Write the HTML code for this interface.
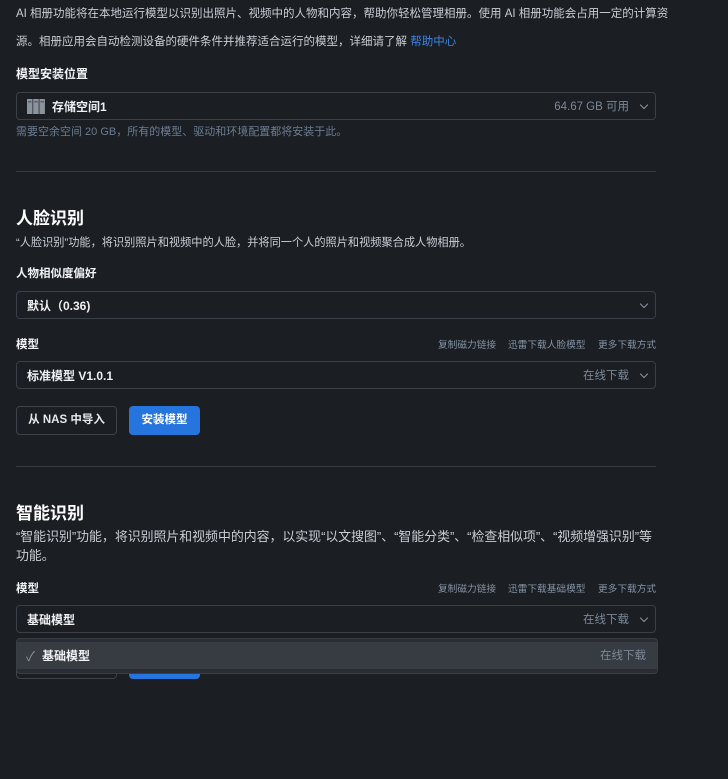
<!DOCTYPE html>
<html><head><meta charset="utf-8"><style>
*{margin:0;padding:0;box-sizing:border-box}
body{width:728px;height:779px;background:#1b1e23;font-family:"Liberation Sans","Noto Sans CJK SC",sans-serif;color:#d8dde3;position:relative;overflow:hidden;font-size:12px}
.a{position:absolute;white-space:nowrap}
.p{font-size:11.5px;color:#c9ced5}
.lbl{font-size:12px;font-weight:bold;color:#f0f2f5}
.h{font-size:17px;font-weight:bold;color:#fff}
.sel{position:absolute;left:16px;width:640px;height:28px;border:1px solid #3b4048;border-radius:4px}
.sel .t{position:absolute;left:10px;top:5px;font-size:12px;color:#eef0f3}
.sel .r{position:absolute;right:26px;top:5px;font-size:11.5px;color:#7d8896}
.chev{position:absolute;right:8px;top:9px;width:6px;height:6px;border-right:1px solid #8a94a0;border-bottom:1px solid #8a94a0;transform:rotate(45deg)}
.div{position:absolute;left:16px;width:640px;height:1px;background:#363a41}
.lk{position:absolute;font-size:9.7px;color:#8593a3;top:0}
.btn1{position:absolute;left:16px;width:101px;height:29px;border:1px solid #3e434b;border-radius:4px;font-size:11.5px;font-weight:bold;color:#e6e8eb;text-align:center;line-height:27px}
.btn2{position:absolute;left:129px;width:71px;height:29px;background:#2674dd;border-radius:4px;font-size:11.5px;font-weight:bold;color:#fff;text-align:center;line-height:29px}
</style></head><body>
<div class="a p" style="left:16px;top:0px;line-height:28px">AI 相册功能将在本地运行模型以识别出照片、视频中的人物和内容，帮助你轻松管理相册。使用 AI 相册功能会占用一定的计算资<br>源。相册应用会自动检测设备的硬件条件并推荐适合运行的模型，详细请了解 <span style="color:#3a86e6">帮助中心</span></div>
<div class="a lbl" style="left:16px;top:65px">模型安装位置</div>
<div class="sel" style="top:92px">
 <svg style="position:absolute;left:10px;top:6px" width="18" height="15" viewBox="0 0 18 15"><rect x="0" y="0" width="5.5" height="15" fill="#8d939c"/><rect x="6.2" y="0" width="5.5" height="15" fill="#8d939c"/><rect x="12.4" y="0" width="5.5" height="15" fill="#8d939c"/><rect x="1" y="2" width="3.5" height="1.5" fill="#5c626b"/><rect x="7.2" y="2" width="3.5" height="1.5" fill="#5c626b"/><rect x="13.4" y="2" width="3.5" height="1.5" fill="#5c626b"/></svg>
 <span class="t" style="left:35px;font-weight:bold">存储空间1</span><span class="r">64.67 GB 可用</span><i class="chev"></i></div>
<div class="a" style="left:16px;top:123px;font-size:11px;color:#6a7d92">需要空余空间 20 GB，所有的模型、驱动和环境配置都将安装于此。</div>
<div class="div" style="top:171px"></div>
<div class="a h" style="left:16px;top:204px">人脸识别</div>
<div class="a p" style="left:16px;top:234px;font-size:11.2px">“人脸识别”功能，将识别照片和视频中的人脸，并将同一个人的照片和视频聚合成人物相册。</div>
<div class="a lbl" style="left:16px;top:265px;font-size:11.5px">人物相似度偏好</div>
<div class="sel" style="top:291px"><span class="t" style="font-weight:bold">默认（0.36)</span><i class="chev"></i></div>
<div class="a lbl" style="left:16px;top:336px;font-size:11.5px">模型</div>
<div style="position:absolute;top:337px;left:0;width:728px"><span class="lk" style="left:438px">复制磁力链接</span><span class="lk" style="left:508px">迅雷下载人脸模型</span><span class="lk" style="left:598px">更多下载方式</span></div>
<div class="sel" style="top:361px"><span class="t" style="font-weight:bold">标准模型 V1.0.1</span><span class="r">在线下载</span><i class="chev"></i></div>
<div class="btn1" style="top:406px">从 NAS 中导入</div>
<div class="btn2" style="top:406px">安装模型</div>
<div class="div" style="top:466px"></div>
<div class="a h" style="left:16px;top:499px">智能识别</div>
<div class="a p" style="left:16px;top:527px;line-height:19px;font-size:12.9px">“智能识别”功能，将识别照片和视频中的内容，以实现“以文搜图”、“智能分类”、“检查相似项”、“视频增强识别”等<br>功能。</div>
<div class="a lbl" style="left:16px;top:580px;font-size:11.5px">模型</div>
<div style="position:absolute;top:581px;left:0;width:728px"><span class="lk" style="left:438px">复制磁力链接</span><span class="lk" style="left:508px">迅雷下载基础模型</span><span class="lk" style="left:598px">更多下载方式</span></div>
<div class="sel" style="top:605px"><span class="t" style="font-weight:bold">基础模型</span><span class="r">在线下载</span><i class="chev"></i></div>
<div class="btn1" style="top:650px"></div>
<div class="btn2" style="top:650px"></div>
<div style="position:absolute;left:16px;top:638px;width:642px;height:36px;background:#2a2e34;border:1px solid #3a3f46;border-radius:4px">
 <div style="position:absolute;left:0;top:3px;width:640px;height:27px;background:#373c43">
  <span class="a" style="left:9px;top:4px;color:#8a929c;font-size:13px">✓</span>
  <span class="a" style="left:25px;top:5px;font-weight:bold;color:#f0f2f5;font-size:12px">基础模型</span>
  <span class="a" style="right:11px;top:5px;color:#7d8896;font-size:11.5px">在线下载</span>
 </div>
</div>
</body></html>
